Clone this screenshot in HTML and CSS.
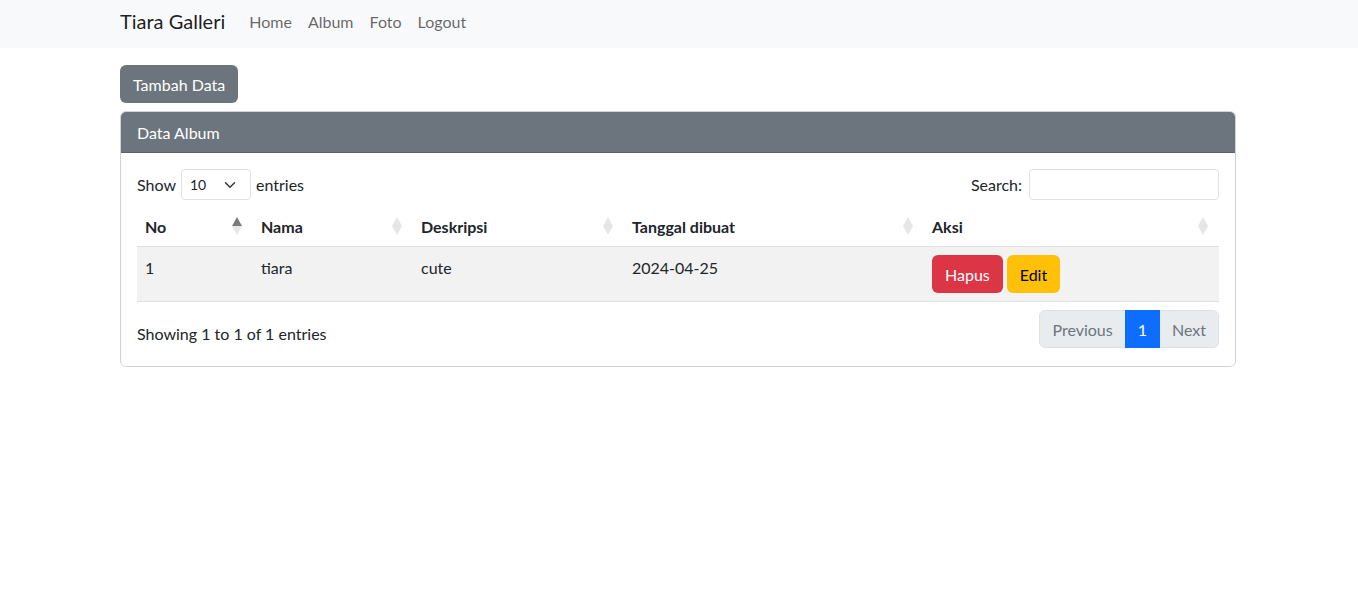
FILE: index.html
```html
<!DOCTYPE html>
<html lang="id">
<head>
<meta charset="utf-8">
<title>Tiara Galleri</title>
<link rel="stylesheet" href="styles.css">
</head>
<body>
<nav class="navbar">
  <div class="container nav-inner">
    <a class="brand" href="#">Tiara Galleri</a>
    <ul class="nav-links">
      <li><a href="#">Home</a></li>
      <li><a href="#">Album</a></li>
      <li><a href="#">Foto</a></li>
      <li><a href="#">Logout</a></li>
    </ul>
  </div>
</nav>
<main class="container main">
  <button class="btn btn-secondary add-btn">Tambah Data</button>
  <div class="card">
    <div class="card-header">Data Album</div>
    <div class="card-body">
      <div class="dt-top">
        <label class="dt-length">Show
          <span class="select">10<svg class="chev" width="12" height="12" viewBox="0 0 16 16"><path d="M2 5l6 6 6-6" fill="none" stroke="#343a40" stroke-width="2" stroke-linecap="round" stroke-linejoin="round"/></svg></span>
          entries</label>
        <label class="dt-search">Search: <span class="input"></span></label>
      </div>
      <table class="table">
        <thead>
          <tr>
            <th class="c-no sort asc">No</th>
            <th class="c-nama sort">Nama</th>
            <th class="c-desk sort">Deskripsi</th>
            <th class="c-tgl sort">Tanggal dibuat</th>
            <th class="c-aksi sort">Aksi</th>
          </tr>
        </thead>
        <tbody>
          <tr class="odd">
            <td>1</td>
            <td>tiara</td>
            <td>cute</td>
            <td>2024-04-25</td>
            <td class="aksi"><div class="actions"><button class="btn btn-danger">Hapus</button><button class="btn btn-warning">Edit</button></div></td>
          </tr>
        </tbody>
      </table>
      <div class="dt-bottom">
        <div class="dt-info">Showing 1 to 1 of 1 entries</div>
        <ul class="pagination">
          <li class="page disabled first">Previous</li>
          <li class="page active">1</li>
          <li class="page disabled last">Next</li>
        </ul>
      </div>
    </div>
  </div>
</main>
</body>
</html>
```

FILE: styles.css
```css
* { box-sizing: border-box; }
body {
  margin: 0;
  font-family: "Lato", "Noto Sans", sans-serif;
  font-size: 16px;
  line-height: 1.5;
  color: #212529;
  background: #fff;
}
.container {
  width: 1118px;
  padding-right: 2px;
  margin: 0 auto;
}
.navbar {
  background: #f8f9fa;
  height: 48px;
}
.nav-inner {
  display: flex;
  align-items: center;
  height: 48px;
  padding-bottom: 6px;
}
.brand {
  font-size: 20px;
  color: rgba(0,0,0,.9);
  text-decoration: none;
  margin-right: 16px;
}
.nav-links {
  display: flex;
  list-style: none;
  margin: 0;
  padding: 0;
  padding-top: 1px;
}
.nav-links a {
  display: block;
  padding: 0 8px;
  color: rgba(0,0,0,.6);
  text-decoration: none;
}
.main { padding-top: 17px; }
.btn {
  font-family: inherit;
  font-size: 16px;
  line-height: 24px;
  border: 1px solid transparent;
  border-radius: 6px;
  padding: 7px 12px 5px;
  cursor: pointer;
}
.btn-secondary { background: #6c757d; color: #fff; }
.btn-danger { background: #dc3545; color: #fff; }
.btn-warning { background: #ffc107; color: #000; }
.add-btn { display: block; margin-bottom: 8px; }
.card {
  border: 1px solid rgba(0,0,0,.175);
  border-radius: 6px;
  overflow: hidden;
}
.card-header {
  background: #6c757d;
  color: #fff;
  padding: 9px 16px 7px;
  height: 41px;
  border-bottom: 1px solid rgba(0,0,0,.175);
}
.card-body { padding: 16px; }
.dt-top {
  display: flex;
  justify-content: space-between;
  align-items: center;
  height: 31px;
}
.dt-length, .dt-search {
  display: flex;
  align-items: center;
  gap: 4px;
}
.select {
  display: inline-flex;
  align-items: center;
  justify-content: space-between;
  width: 70px;
  height: 31px;
  padding: 0 14px 0 8px;
  border: 1px solid #dee2e6;
  border-radius: 4px;
  font-size: 14px;
  margin: 0 1px;
}
.input {
  display: inline-block;
  width: 190px;
  height: 31px;
  border: 1px solid #dee2e6;
  border-radius: 4px;
  margin-left: 3px;
}
.table {
  width: 100%;
  border-collapse: collapse;
  margin-top: 6px;
  table-layout: fixed;
}
.table th {
  text-align: left;
  font-weight: 700;
  padding: 9px 30px 7px 8px;
  border-bottom: 1px solid #dee2e6;
  position: relative;
}
.c-no { width: 116px; }
.c-nama { width: 160px; }
.c-desk { width: 211px; }
.c-tgl { width: 300px; }
.sort::before, .sort::after {
  content: "";
  position: absolute;
  right: 11px;
  width: 0; height: 0;
  border-left: 5px solid transparent;
  border-right: 5px solid transparent;
}
.sort::before {
  top: 11px;
  border-bottom: 9px solid #e6e6e6;
}
.sort::after {
  top: 20px;
  border-top: 9px solid #e6e6e6;
}
.asc::before { border-bottom-color: #7b7b7b; }
.table td {
  padding: 9px 8px 7px;
  vertical-align: top;
  border-bottom: 1px solid #dee2e6;
}
.table td.aksi { padding: 8px; }
.odd td { background: #f2f2f2; }
.actions { display: flex; gap: 4px; }
.dt-bottom {
  display: flex;
  justify-content: space-between;
  align-items: center;
  margin-top: 8px;
  padding-bottom: 2px;
}
.dt-info { padding-top: 9px; }
.pagination {
  display: flex;
  list-style: none;
  margin: 0;
  padding: 0;
}
.page {
  padding: 7px 12px 5px;
  line-height: 24px;
  border: 1px solid #dee2e6;
  margin-left: -1px;
}
.page.disabled { background: #e9ecef; color: #6c757d; }
.page.active { background: #0d6efd; border-color: #0d6efd; color: #fff; position: relative; }
.first { border-radius: 6px 0 0 6px; }
.last { border-radius: 0 6px 6px 0; }
```
